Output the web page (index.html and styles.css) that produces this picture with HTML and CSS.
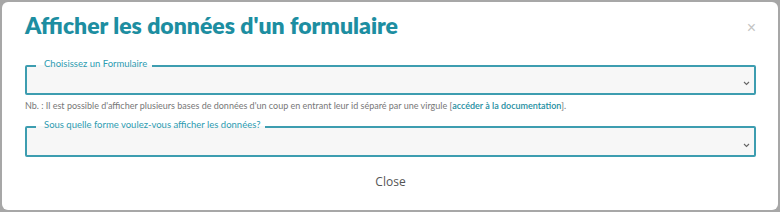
FILE: index.html
```html
<!DOCTYPE html>
<html lang="fr">
  <head>
    <meta charset="UTF-8" />
    <meta name="viewport" content="width=device-width, initial-scale=1.0" />
    <title>Afficher les données</title>
    <link rel="stylesheet" href="styles.css">
  </head>
  <body>
    <div class="modal">
      <div class="modal-header">
        <h2>Afficher les données d'un formulaire</h2>
        <button class="close-x" type="button">&times;</button>
      </div>
      <div class="modal-body">
        <fieldset class="field">
          <legend>Choisissez un Formulaire</legend>
          <div class="select-row">
            <span class="select-value"></span>
            <svg class="chevron" width="7" height="5" viewBox="0 0 7 5">
              <path d="M1 1 L3.5 3.5 L6 1" fill="none" stroke="#666" stroke-width="1.1" />
            </svg>
          </div>
        </fieldset>
        <p class="note">
          Nb. : Il est possible d'afficher plusieurs bases de données d'un coup en entrant leur id séparé par une virgule [<a href="#">accéder à la documentation</a>].
        </p>
        <fieldset class="field field-tall">
          <legend>Sous quelle forme voulez-vous afficher les données?</legend>
          <div class="select-row">
            <span class="select-value"></span>
            <svg class="chevron" width="7" height="5" viewBox="0 0 7 5">
              <path d="M1 1 L3.5 3.5 L6 1" fill="none" stroke="#666" stroke-width="1.1" />
            </svg>
          </div>
        </fieldset>
      </div>
      <div class="modal-footer">
        <button class="close-btn" type="button">Close</button>
      </div>
    </div>
  </body>
</html>
```

FILE: styles.css
```css
body {
  margin: 0;
  padding: 2px 2px 1px 2px;
  background: #a7a7a7;
  font-family: Lato, "Open Sans", sans-serif;
  height: 212px;
  box-sizing: border-box;
}
.modal {
  background: #fff;
  border-radius: 6px;
  height: 208px;
  box-sizing: border-box;
  padding: 0 22px 0 23px;
  display: flex;
  flex-direction: column;
}
.modal-header {
  display: flex;
  justify-content: space-between;
  align-items: center;
  padding-top: 10px;
}
.modal-header h2 {
  margin: 0;
  color: #1d8ea1;
  font-size: 23px;
  font-weight: 800;
  line-height: 27px;
}
.close-x {
  border: none;
  background: none;
  color: #c4c4c4;
  font-size: 16px;
  padding: 0;
  margin-top: 4px;
  font-family: Arial, sans-serif;
}
.modal-body {
  padding-top: 19px;
}
.field {
  margin: 0;
  padding: 0;
  min-width: 0;
  border: 2px solid #3d9db0;
  border-radius: 2px;
  background: #f7f7f7;
}
.field legend {
  margin-left: 9px;
  padding: 0 5px 4px 8px;
  font-size: 9.5px;
  line-height: 12px;
  color: #2e9cb1;
}
.select-row {
  display: flex;
  align-items: center;
  justify-content: space-between;
  height: 19px;
  padding: 0 4px 0 8px;
}
.field-tall .select-row {
  height: 20px;
}
.chevron {
  display: block;
}
.note {
  margin: 5px 0 7px;
  font-size: 9px;
  line-height: 12px;
  color: #777;
}
.note a {
  color: #1d8ea1;
  text-decoration: none;
  font-weight: 600;
}
.modal-footer {
  display: flex;
  justify-content: center;
  padding-top: 16px;
}
.close-btn {
  border: none;
  background: none;
  font-family: "Open Sans", sans-serif;
  font-size: 12px;
  color: #555;
  padding: 0;
}
```
